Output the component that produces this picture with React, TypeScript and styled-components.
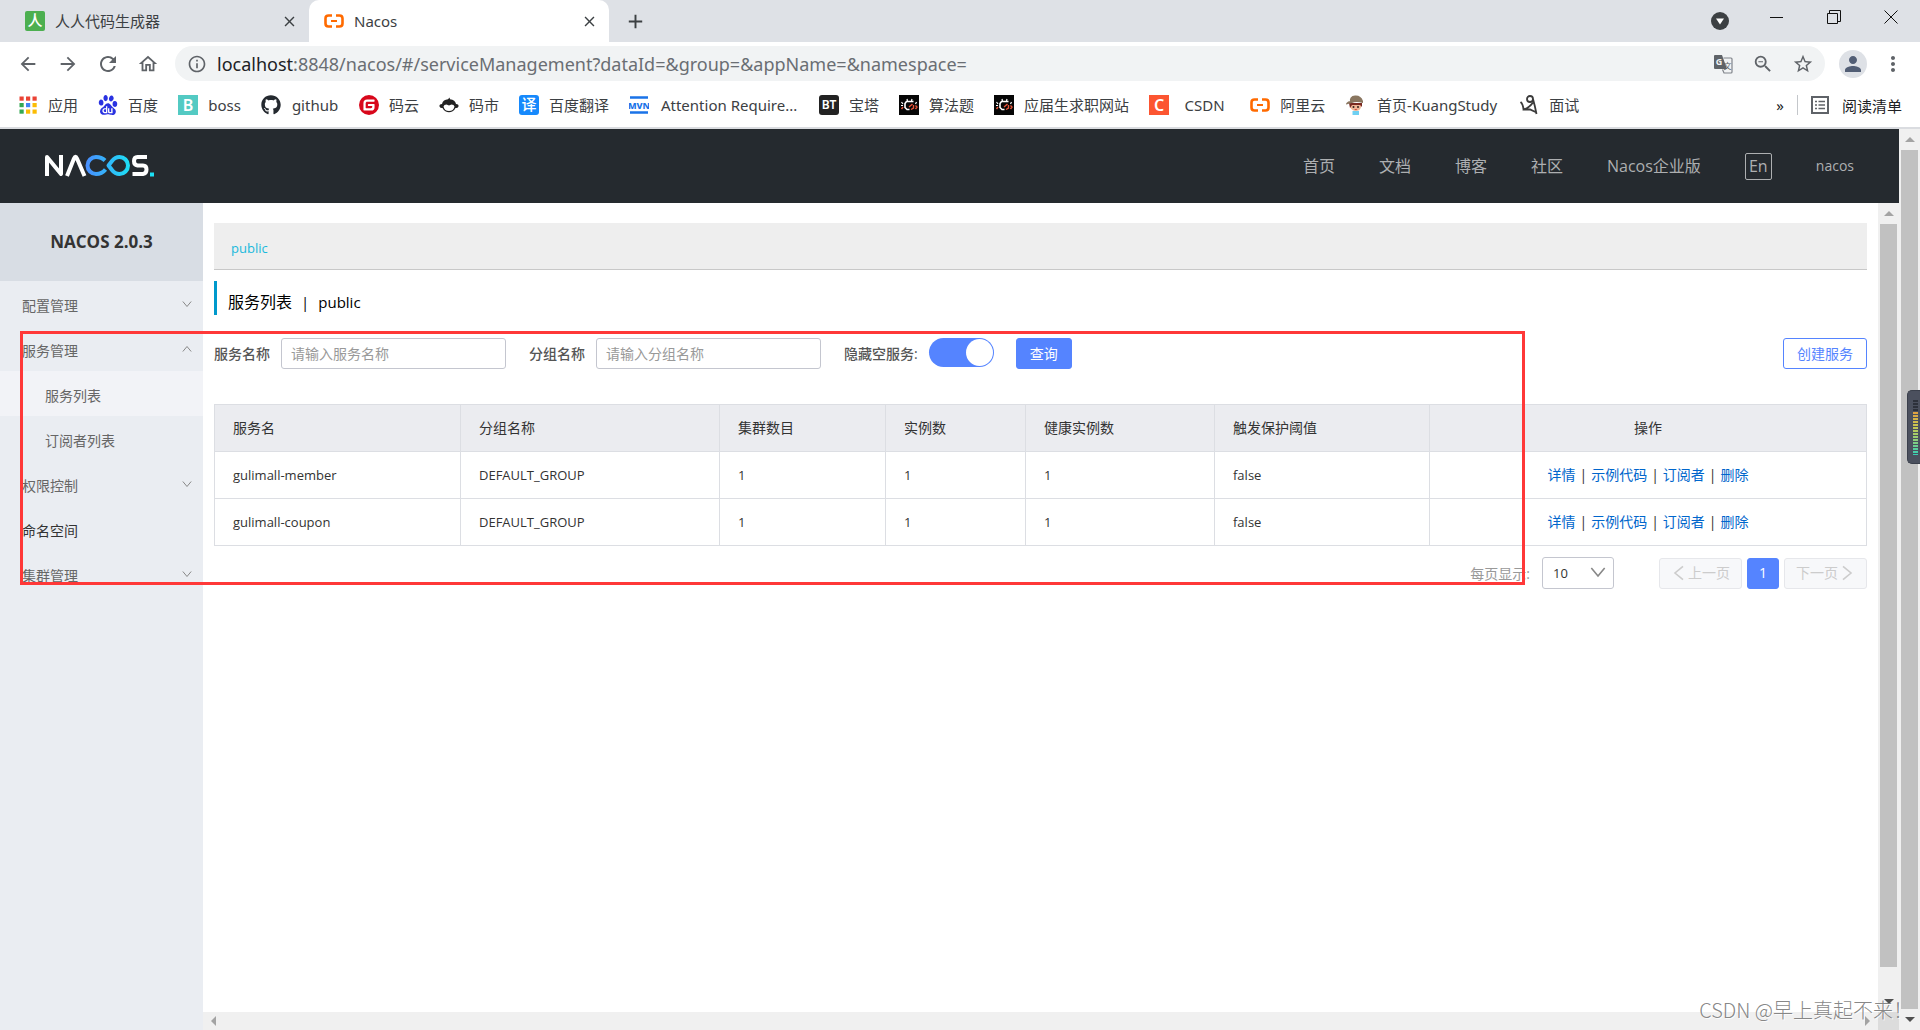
import React from "react";
import styled, { createGlobalStyle, css } from "styled-components";
import {
  MdAdd,
  MdArrowBack,
  MdArrowForward,
  MdClose,
  MdInfoOutline,
  MdMoreVert,
  MdOutlineHome,
  MdPerson,
  MdRefresh,
  MdStarBorder,
  MdZoomOut,
} from "react-icons/md";
import { FaGithub } from "react-icons/fa";
import { SiBaidu, SiGitee } from "react-icons/si";

const sans = `"Open Sans", "Noto Sans CJK SC", sans-serif`;
const chromeSans = `"Noto Sans", "Noto Sans CJK SC", sans-serif`;

const GlobalStyle = createGlobalStyle`
  * { box-sizing: border-box; }
  body { margin: 0; font-family: ${sans}; font-size: 14px; color: #333; background: #fff; overflow: hidden; }
  button, input, select { font-family: inherit; }
  a { text-decoration: none; }
`;

const Window = styled.div`
  position: relative;
  display: flex;
  flex-direction: column;
  height: 100vh;
  overflow: hidden;
`;

/* ---------- browser chrome ---------- */

const IconButton = styled.button<{ $size?: number; $color?: string }>`
  display: flex;
  align-items: center;
  justify-content: center;
  flex: none;
  width: ${(p) => p.$size ?? 40}px;
  height: ${(p) => p.$size ?? 40}px;
  padding: 0;
  border: 0;
  background: none;
  color: ${(p) => p.$color ?? "#5f6368"};
`;

const TabStrip = styled.div`
  display: flex;
  align-items: center;
  height: 42px;
  flex: none;
  font-family: ${chromeSans};
  background: #dee1e6;
`;

const Tab = styled.div<{ $active?: boolean }>`
  display: flex;
  align-items: center;
  gap: 10px;
  width: ${(p) => (p.$active ? 300 : 309)}px;
  height: 42px;
  padding: 0 11px 0 ${(p) => (p.$active ? 15 : 25)}px;
  border-radius: 10px 10px 0 0;
  font-size: 15px;
  color: #3c4043;
  background: ${(p) => (p.$active ? "#fff" : "transparent")};
`;

const TabTitle = styled.span`
  flex: 1;
  line-height: 20px;
`;

const WindowControls = styled.div`
  display: flex;
  align-items: center;
  margin-left: auto;
  height: 42px;
  padding-right: 9px;
`;

const WindowButton = styled(IconButton)`
  width: 40px;
  height: 34px;
  margin-left: 17px;
  align-self: flex-start;
  color: #111;
`;

const Toolbar = styled.div`
  display: flex;
  align-items: center;
  flex: none;
  height: 43px;
  padding: 0 7px 0 8px;
  font-family: ${chromeSans};
`;

const Omnibox = styled.div`
  display: flex;
  align-items: center;
  flex: 1;
  height: 35px;
  margin: 0 8px 0 7px;
  padding: 0 2px 0 12px;
  gap: 10px;
  border-radius: 18px;
  background: #f1f3f4;
  color: #5f6368;
`;

const Url = styled.span`
  flex: 1;
  font-size: 18px;
  line-height: 24px;
  color: #6a6e73;
  b { font-weight: 400; color: #202124; }
`;

const OmniActions = styled.div`
  display: flex;
`;

const Avatar = styled.span`
  display: flex;
  align-items: center;
  justify-content: center;
  width: 28px;
  height: 28px;
  border-radius: 50%;
  background: #dee1e6;
  color: #525e75;
`;

const Bookmarks = styled.nav`
  display: flex;
  align-items: center;
  flex: none;
  height: 44px;
  padding: 0 18px 2px;
  gap: 20px;
  border-bottom: 2px solid #dadce0;
  font-family: ${chromeSans};
`;

const Bookmark = styled.a`
  display: flex;
  align-items: center;
  gap: 10px;
  flex: none;
  font-size: 15px;
  line-height: 20px;
  color: #3c4043;
  white-space: nowrap;
  svg { flex: none; }
`;

const BookmarkLabel = styled.span<{ $width?: number }>`
  min-width: ${(p) => p.$width ?? 30}px;
  text-align: center;
`;

const ReadingList = styled.div`
  display: flex;
  align-items: center;
  gap: 13px;
  margin-left: auto;
  font-size: 15px;
  color: #202124;
`;

const Divider = styled.span`
  width: 1px;
  height: 20px;
  background: #c4c7cb;
`;

/* ---------- page ---------- */

const Viewport = styled.div`
  display: flex;
  flex: 1;
  min-height: 0;
`;

const Page = styled.div`
  display: flex;
  flex-direction: column;
  flex: 1;
  min-width: 0;
`;

const Header = styled.header`
  display: flex;
  align-items: center;
  justify-content: space-between;
  flex: none;
  height: 74px;
  padding: 0 45px 0 45px;
  background: #252a2f;
`;

const HeaderNav = styled.nav`
  display: flex;
  align-items: center;
  gap: 44px;
`;

const HeaderLink = styled.a<{ $small?: boolean }>`
  font-size: ${(p) => (p.$small ? 14 : 16)}px;
  line-height: 24px;
  color: #adafb1;
`;

const LangButton = styled.button`
  width: 27px;
  height: 27px;
  padding: 0;
  border: 1px solid #adafb1;
  border-radius: 2px;
  background: none;
  color: #adafb1;
  font-size: 16px;
  line-height: 22px;
`;

const Body = styled.div`
  display: flex;
  flex: 1;
  min-height: 0;
`;

const Sidebar = styled.aside`
  flex: none;
  width: 203px;
  background: #eaedf2;
`;

const SideTitle = styled.h1`
  margin: 0;
  height: 78px;
  font-size: 17px;
  line-height: 78px;
  font-weight: 700;
  text-align: center;
  color: #333;
  background: #d8dde4;
`;

const MenuItem = styled.button<{ $level?: number; $active?: boolean; $dark?: boolean }>`
  display: flex;
  align-items: center;
  justify-content: space-between;
  width: 100%;
  height: 45px;
  padding: 0 11px 0 ${(p) => (p.$level === 2 ? 45 : 22)}px;
  border: 0;
  font-size: 14px;
  text-align: left;
  color: ${(p) => (p.$dark ? "#333" : "#666")};
  background: ${(p) => (p.$active ? "#f2f3f7" : "transparent")};
  span { padding-top: 3px; }
`;

const Column = styled.div`
  display: flex;
  flex-direction: column;
  flex: 1;
  min-width: 0;
`;

const Content = styled.main`
  flex: 1;
  min-height: 0;
  padding: 20px 11px 0;
`;

const NamespaceBar = styled.div`
  display: flex;
  align-items: center;
  height: 47px;
  padding: 4px 17px 0;
  border-bottom: 1px solid #c8c8c8;
  background: #eee;
  a { font-size: 13px; color: #1ab9dc; }
`;

const PageTitle = styled.h2`
  display: flex;
  gap: 9px;
  height: 34px;
  margin: 11px 0 23px;
  padding: 6px 0 0 11px;
  border-left: 3px solid #09c;
  font-size: 16px;
  line-height: 30px;
  font-weight: 400;
  color: #000;
  span { font-size: 15px; }
`;

const Form = styled.form`
  display: flex;
  align-items: center;
  height: 31px;
`;

const Label = styled.label`
  flex: none;
  margin-right: 11px;
  font-size: 14px;
  line-height: 20px;
  font-weight: 500;
  color: #555;
`;

const TextInput = styled.input`
  width: 225px;
  height: 31px;
  margin-right: 23px;
  padding: 0 9px;
  border: 1px solid #c4c6cf;
  border-radius: 3px;
  font-size: 14px;
  color: #333;
  &::placeholder { color: #999; opacity: 1; }
`;

const Switch = styled.input`
  appearance: none;
  display: flex;
  justify-content: flex-end;
  width: 65px;
  height: 29px;
  margin: 0 22px 2px 0;
  padding: 1px;
  border-radius: 15px;
  background: #5584ff;
  &::after {
    content: "";
    width: 27px;
    height: 27px;
    border-radius: 50%;
    background: #fff;
  }
`;

const Button = styled.button<{ $kind?: "primary" | "outline" | "disabled"; $tight?: boolean }>`
  display: flex;
  align-items: center;
  justify-content: center;
  gap: 1px;
  height: 31px;
  padding: 0 ${(p) => (p.$tight ? 11 : 13)}px;
  border: 1px solid #5584ff;
  border-radius: 3px;
  font-size: 14px;
  line-height: 20px;
  white-space: nowrap;
  ${(p) =>
    p.$kind === "outline"
      ? css`background: #fff; color: #5584ff;`
      : p.$kind === "disabled"
      ? css`background: #f7f8fa; color: #ccc; border-color: #e6e7eb;`
      : css`background: #5584ff; color: #fff;`}
`;

const Spacer = styled.span`
  flex: 1;
`;

const Table = styled.table`
  width: 100%;
  margin-top: 35px;
  border-collapse: collapse;
  table-layout: fixed;
  color: #333;
`;

const cell = css<{ $center?: boolean }>`
  height: 47px;
  padding: 0 18px;
  border: 1px solid #dcdee3;
  font-size: 14px;
  line-height: 20px;
  font-weight: 400;
  text-align: ${(p) => (p.$center ? "center" : "left")};
`;
const Th = styled.th`
  ${cell}
  background: #ebecf0;
`;
const Td = styled.td`
  ${cell}
`;
const Latin = styled.span`
  font-size: 13px;
`;

const Action = styled.a`
  color: #06c;
`;
const Bar = styled.span`
  margin: 0 4px;
`;

const Pager = styled.div`
  display: flex;
  align-items: center;
  justify-content: flex-end;
  margin-top: 11px;
  gap: 5px;
`;

const PageSizeLabel = styled.label`
  margin-right: 7px;
  color: #999;
`;

const SelectBox = styled.div`
  position: relative;
  margin-right: 40px;
  svg { position: absolute; right: 8px; top: 7px; pointer-events: none; }
`;

const Select = styled.select`
  appearance: none;
  display: block;
  width: 72px;
  height: 32px;
  padding: 0 10px;
  border: 1px solid #c4c6cf;
  border-radius: 3px;
  background: #fff;
  font-size: 13px;
  color: #333;
`;

const ScrollTrack = styled.div`
  display: flex;
  flex-direction: column;
  align-items: center;
  flex: none;
  width: 21px;
  background: #f0f0f0;
`;

const ScrollThumb = styled.div`
  flex: 1;
  width: 17px;
  background: #c1c1c1;
`;

const ScrollArrow = styled.span<{ $dir: "up" | "down" | "left" | "right"; $dark?: boolean }>`
  display: flex;
  align-items: center;
  justify-content: center;
  flex: none;
  width: 21px;
  height: 21px;
  &::after {
    content: "";
    border: 5px solid transparent;
    ${(p) => {
      const c = p.$dark ? "#505050" : "#a3a3a3";
      if (p.$dir === "up") return `border-bottom-color: ${c}; border-top: 0;`;
      if (p.$dir === "down") return `border-top-color: ${c}; border-bottom: 0;`;
      if (p.$dir === "left") return `border-right-color: ${c}; border-left: 0;`;
      return `border-left-color: ${c}; border-right: 0;`;
    }}
  }
`;

const InnerTrack = styled(ScrollTrack)`
  & > :nth-child(2) { margin-bottom: 24px; }
`;

const Corner = styled.span`
  width: 21px;
  height: 18px;
  background: #dcdcdc;
`;

const HScroll = styled.div`
  display: flex;
  align-items: center;
  justify-content: space-between;
  flex: none;
  height: 18px;
  background: #f0f0f0;
`;

const Selection = styled.div`
  position: absolute;
  left: 20px;
  right: 395px;
  top: 331px;
  height: 254px;
  border: 3px solid #ff3838;
  pointer-events: none;
`;

const Meter = styled.div`
  position: absolute;
  right: 0;
  top: 390px;
  width: 13px;
  height: 74px;
  padding: 9px 2px 9px 5px;
  border: 1px solid #3a3f4b;
  border-right: 0;
  border-radius: 5px 0 0 5px;
  background: #4b505e;
  &::after {
    content: "";
    display: block;
    height: 55px;
    background:
      repeating-linear-gradient(transparent 0 2px, #4b505e 2px 3px),
      linear-gradient(#2d313b 0 12px, #e0a040 12px, #c9c850 26px, #8fcf7a 40px, #35d0b4);
  }
`;

const Watermark = styled.div`
  position: absolute;
  right: 7px;
  bottom: 4px;
  font-family: "Noto Sans CJK SC", sans-serif;
  font-size: 20px;
  line-height: 32px;
  font-weight: 300;
  color: rgba(120, 120, 120, 0.9);
  text-shadow: 1px 1px 0 rgba(255, 255, 255, 0.8);
  pointer-events: none;
`;

/* ---------- drawings ---------- */

const CloudIcon = () => (
  <svg width="20" height="20" viewBox="0 0 20 20" fill="none" stroke="#ff6a00" strokeWidth="2.600">
    <path d="M8 4.500H4.500Q1.500 4.500 1.500 7.500V12.500Q1.500 15.500 4.500 15.500H8M12 4.500H15.500Q18.500 4.500 18.500 7.500V12.500Q18.500 15.500 15.500 15.500H12" />
    <path d="M7 10H13" strokeWidth="2" />
  </svg>
);

interface BadgeProps {
  bg: string;
  text: string;
  size: number;
  radius?: number;
  bold?: boolean;
}
const Badge = ({ bg, text, size, radius = 0, bold }: BadgeProps) => (
  <svg width="20" height="20" viewBox="0 0 20 20">
    <rect width="20" height="20" rx={radius} fill={bg} />
    <text x="10" y={10 + size * 0.36} fontSize={size} fontWeight={bold ? 600 : 500} fill="#fff" textAnchor="middle">
      {text}
    </text>
  </svg>
);

const appColors = ["#ea4335", "#ea4335", "#ea4335", "#34a853", "#4285f4", "#fbbc04", "#34a853", "#fbbc04", "#fbbc04"];
const AppsIcon = () => (
  <svg width="20" height="20" viewBox="0 0 20 20">
    {appColors.map((c, i) => (
      <rect key={i} x={1.5 + (i % 3) * 6.5} y={1.5 + Math.floor(i / 3) * 6.5} width="4.200" height="4.200" fill={c} />
    ))}
  </svg>
);

const MonkeyIcon = () => (
  <svg width="20" height="20" viewBox="0 0 20 20">
    <path d="M3 9C3.500 6 6 4.500 9 4.300L10.500 2.500L11 4.300C14.500 4.500 16.500 6.500 17 9Q20 9 19.500 11.500Q18.500 13.500 16.500 13C15 16 12.500 17.300 10 17.300S5 16 3.500 13Q1.500 13.500 .5 11.500Q0 9 3 9Z" fill="#222" />
    <path d="M4.500 11.500Q5 9.500 7.500 9.500L10 10.500L12.500 9.500Q15 9.500 15.500 11.500Q14.500 16 10 16T4.500 11.500Z" fill="#fff" />
  </svg>
);

const MvnIcon = () => (
  <svg width="20" height="20" viewBox="0 0 20 20">
    <path d="M1 2.500H19M1 17.500H19" stroke="#1a73e8" strokeWidth="2.500" />
    <text x="10" y="13.500" fontSize="9" fontWeight="800" fill="#1a73e8" textAnchor="middle">MVN</text>
  </svg>
);

const BugIcon = () => (
  <svg width="20" height="20" viewBox="0 0 20 20" fill="none">
    <rect width="20" height="20" fill="#060606" />
    <path d="M14.500 6.500H7.500L6 8.500V12.500L8 14.500H10.500" stroke="#fff" strokeWidth="1.600" />
    <path d="M8.500 6L8 4M12.500 6L13 4M4 9L2.500 7M4 10.500H2M16.500 9L17.500 7" stroke="#fff" strokeWidth="1.200" />
    <path d="M13.500 9L10 12M12 14.500L14.500 13V10M4 12L2.500 14M16.500 10.500L18 12L16.500 14" stroke="#e8553a" strokeWidth="1.400" />
  </svg>
);

const BoyIcon = () => (
  <svg width="20" height="20" viewBox="0 0 20 20">
    <path d="M5 9H16V12Q15 16 11 16T5 12Z" fill="#f0b595" />
    <path d="M4 8H17V12L15 10H7L5 13Z" fill="#7a2a22" />
    <path d="M5 7Q4 1 10 .5T18 6V8Q11 6 7 8L1 9.500Q1 7 5 6Z" fill="#8a7660" />
    <circle cx="8.500" cy="12" r="1" fill="#35221e" />
    <circle cx="13" cy="12" r="1" fill="#35221e" />
    <path d="M9 14H12.500L11 15Z" fill="#c4302b" />
    <path d="M7.500 16H14V20H7.500Z" fill="#6fd0f2" />
  </svg>
);

const InterviewIcon = () => (
  <svg width="20" height="20" viewBox="0 0 20 20" fill="none" stroke="#3b3b3b" strokeWidth="1.800">
    <circle cx="11" cy="4" r="3" />
    <path d="M1.500 7Q4 9 4.500 14.500Q10 13 14 7.500M14 4Q16 11 17.500 19M4.500 14.500H11L16.500 17" />
  </svg>
);

const TranslateIcon = () => (
  <svg width="20" height="20" viewBox="0 0 20 20">
    <path d="M2 1H9L14 15H2Q1 15 1 14V2Q1 1 2 1Z" fill="#5f6368" />
    <path d="M10.500 4H18Q19 4 19 5V18Q19 19 18 19H11L9.500 15.500" fill="none" stroke="#80848a" strokeWidth="1.200" />
    <text x="6" y="11" fontSize="9" fontWeight="700" fill="#f1f3f4" textAnchor="middle">G</text>
    <text x="14.500" y="15" fontSize="8" fill="#5f6368" textAnchor="middle">文</text>
  </svg>
);

const ReadingIcon = () => (
  <svg width="18" height="18" viewBox="0 0 18 18" fill="none" stroke="#5f6368" strokeWidth="2">
    <rect x="1" y="1" width="16" height="16" />
    <path d="M4 5.500H6M4 9H6M4 12.500H6M7.500 5.500H14M7.500 9H14M7.500 12.500H14" strokeWidth="1.600" />
  </svg>
);

const DropCircle = () => (
  <svg width="18" height="18" viewBox="0 0 18 18">
    <circle cx="9" cy="9" r="9" fill="#3c4043" />
    <path d="M5 6.500H13L9 12.500Z" fill="#fff" />
  </svg>
);

const Chevron = ({ dir, size = 10 }: { dir: "up" | "down" | "left" | "right"; size?: number }) => {
  const d = {
    down: "M1 3L6 9L11 3",
    up: "M1 9L6 3L11 9",
    left: "M9 1L3 6L9 11",
    right: "M3 1L9 6L3 11",
  }[dir];
  return (
    <svg width={size} height={size} viewBox="0 0 12 12" fill="none" stroke={dir === "left" || dir === "right" ? "#ccc" : "#888"} strokeWidth="1.200">
      <path d={d} />
    </svg>
  );
};

const NacosLogo = () => (
  <svg width="110" height="24" viewBox="0 0 110 24" role="img" aria-label="Nacos">
    <defs>
      <linearGradient id="loop" gradientUnits="userSpaceOnUse" x1="40" x2="85" y1="0" y2="0">
        <stop offset="0" stopColor="#4a8cff" />
        <stop offset="1" stopColor="#1ce0f5" />
      </linearGradient>
    </defs>
    <path d="M2 22V3L16 20V1M22 22L29 4.500Q30.500 1 32 4.500L39.500 22" fill="none" stroke="#fff" strokeWidth="4" strokeLinejoin="round" />
    <path d="M60 6.500C57.500 4 55.500 3 51 3A8.500 8.500 0 0 0 51 20C55.500 20 58.500 18 60.500 15.500" fill="none" stroke="url(#loop)" strokeWidth="4" />
    <path d="M63.500 11.500L67 7Q70 3 74.500 3A8.500 8.500 0 0 1 74.500 20Q70 20 67 16L63.500 11.500Z" fill="none" stroke="url(#loop)" strokeWidth="4" strokeLinejoin="round" />
    <path d="M102 3H92.500Q89 3 89 7T92.500 11.500H98Q101.500 11.500 101.500 15.500T98 20H87.500" fill="none" stroke="#fff" strokeWidth="4" />
    <rect x="105" y="18.500" width="4" height="4" fill="#1ce0f5" />
  </svg>
);

/* ---------- data ---------- */

const bookmarks: { label: string; icon: React.ReactNode; width?: number }[] = [
  { label: "应用", icon: <AppsIcon /> },
  { label: "百度", icon: <SiBaidu size={20} color="#2932e1" /> },
  { label: "boss", icon: <Badge bg="#53cac3" text="B" size={16} bold />, width: 33 },
  { label: "github", icon: <FaGithub size={20} color="#24292f" />, width: 48 },
  { label: "码云", icon: <SiGitee size={20} color="#d8071b" /> },
  { label: "码市", icon: <MonkeyIcon /> },
  { label: "百度翻译", icon: <Badge bg="#1689fc" text="译" size={15} radius={3} /> },
  { label: "Attention Require...", icon: <MvnIcon />, width: 140 },
  { label: "宝塔", icon: <Badge bg="#222" text="BT" size={12} radius={3} bold /> },
  { label: "算法题", icon: <BugIcon /> },
  { label: "应届生求职网站", icon: <BugIcon /> },
  { label: "CSDN", icon: <Badge bg="#fc5531" text="C" size={16} bold />, width: 51 },
  { label: "阿里云", icon: <CloudIcon /> },
  { label: "首页-KuangStudy", icon: <BoyIcon />, width: 124 },
  { label: "面试", icon: <InterviewIcon /> },
];

const columns = [
  { title: "服务名", width: 246 },
  { title: "分组名称", width: 259 },
  { title: "集群数目", width: 166 },
  { title: "实例数", width: 140 },
  { title: "健康实例数", width: 189 },
  { title: "触发保护阈值", width: 215 },
  { title: "操作", width: 437 },
];

const services = [
  ["gulimall-member", "DEFAULT_GROUP", "1", "1", "1", "false"],
  ["gulimall-coupon", "DEFAULT_GROUP", "1", "1", "1", "false"],
];

const actions = ["详情", "示例代码", "订阅者", "删除"];

const menu: { label: string; arrow?: "up" | "down"; level?: number; active?: boolean; dark?: boolean }[] = [
  { label: "配置管理", arrow: "down" },
  { label: "服务管理", arrow: "up" },
  { label: "服务列表", level: 2, active: true },
  { label: "订阅者列表", level: 2 },
  { label: "权限控制", arrow: "down" },
  { label: "命名空间", dark: true },
  { label: "集群管理", arrow: "down" },
];

export default function App() {
  return (
    <Window>
      <GlobalStyle />
      <TabStrip>
        <Tab>
          <Badge bg="#4caf50" text="人" size={15} radius={2} />
          <TabTitle>人人代码生成器</TabTitle>
          <IconButton $size={18} $color="#3c4043" aria-label="关闭"><MdClose size={17} /></IconButton>
        </Tab>
        <Tab $active>
          <CloudIcon />
          <TabTitle>Nacos</TabTitle>
          <IconButton $size={18} $color="#3c4043" aria-label="关闭"><MdClose size={17} /></IconButton>
        </Tab>
        <IconButton $size={52} $color="#3c4043" aria-label="新标签页"><MdAdd size={23} /></IconButton>
        <WindowControls>
          <IconButton aria-label="搜索标签页"><DropCircle /></IconButton>
          <WindowButton aria-label="最小化">
            <svg width="14" height="14" stroke="currentColor"><path d="M0 7.500H13" /></svg>
          </WindowButton>
          <WindowButton aria-label="还原">
            <svg width="14" height="14" fill="none" stroke="currentColor"><path d="M.5 3.500H10.500V13.500H.5ZM2.500 3V.5H13.500V11.500H11" /></svg>
          </WindowButton>
          <WindowButton aria-label="关闭窗口">
            <svg width="14" height="14" stroke="currentColor"><path d="M.5 .5L13.500 13.500M13.500 .5L.5 13.500" /></svg>
          </WindowButton>
        </WindowControls>
      </TabStrip>

      <Toolbar>
        <IconButton aria-label="后退"><MdArrowBack size={22} /></IconButton>
        <IconButton aria-label="前进"><MdArrowForward size={22} /></IconButton>
        <IconButton aria-label="刷新"><MdRefresh size={24} /></IconButton>
        <IconButton aria-label="主页"><MdOutlineHome size={22} /></IconButton>
        <Omnibox>
          <MdInfoOutline size={20} />
          <Url><b>localhost</b>:8848/nacos/#/serviceManagement?dataId=&amp;group=&amp;appName=&amp;namespace=</Url>
          <OmniActions>
            <IconButton aria-label="翻译"><TranslateIcon /></IconButton>
            <IconButton aria-label="缩放"><MdZoomOut size={22} /></IconButton>
            <IconButton aria-label="收藏"><MdStarBorder size={22} /></IconButton>
          </OmniActions>
        </Omnibox>
        <IconButton aria-label="用户"><Avatar><MdPerson size={24} /></Avatar></IconButton>
        <IconButton aria-label="菜单"><MdMoreVert size={24} /></IconButton>
      </Toolbar>

      <Bookmarks>
        {bookmarks.map((b) => (
          <Bookmark href="#" key={b.label}>
            {b.icon}
            <BookmarkLabel $width={b.width}>{b.label}</BookmarkLabel>
          </Bookmark>
        ))}
        <ReadingList>
          <span>»</span>
          <Divider />
          <ReadingIcon />
          <span>阅读清单</span>
        </ReadingList>
      </Bookmarks>

      <Viewport>
        <Page>
          <Header>
            <NacosLogo />
            <HeaderNav>
              {["首页", "文档", "博客", "社区", "Nacos企业版"].map((t) => (
                <HeaderLink href="#" key={t}>{t}</HeaderLink>
              ))}
              <LangButton>En</LangButton>
              <HeaderLink href="#" $small>nacos</HeaderLink>
            </HeaderNav>
          </Header>
          <Body>
            <Sidebar>
              <SideTitle>NACOS 2.0.3</SideTitle>
              {menu.map((m) => (
                <MenuItem key={m.label} $level={m.level} $active={m.active} $dark={m.dark}>
                  <span>{m.label}</span>
                  {m.arrow && <Chevron dir={m.arrow} />}
                </MenuItem>
              ))}
            </Sidebar>
            <Column>
              <Content>
                <NamespaceBar><a href="#">public</a></NamespaceBar>
                <PageTitle>服务列表<span>|</span><span>public</span></PageTitle>
                <Form onSubmit={(e) => e.preventDefault()}>
                  <Label htmlFor="service">服务名称</Label>
                  <TextInput id="service" placeholder="请输入服务名称" />
                  <Label htmlFor="group">分组名称</Label>
                  <TextInput id="group" placeholder="请输入分组名称" />
                  <Label htmlFor="hide">隐藏空服务:</Label>
                  <Switch id="hide" type="checkbox" defaultChecked />
                  <Button>查询</Button>
                  <Spacer />
                  <Button type="button" $kind="outline">创建服务</Button>
                </Form>
                <Table>
                  <colgroup>
                    {columns.map((c) => <col key={c.title} width={c.width} />)}
                  </colgroup>
                  <thead>
                    <tr>
                      {columns.map((c) => <Th key={c.title} $center={c.title === "操作"}>{c.title}</Th>)}
                    </tr>
                  </thead>
                  <tbody>
                    {services.map((row) => (
                      <tr key={row[0]}>
                        {row.map((v, i) => <Td key={i}><Latin>{v}</Latin></Td>)}
                        <Td $center>
                          {actions.map((a, i) => (
                            <React.Fragment key={a}>
                              {i > 0 && <Bar>|</Bar>}
                              <Action href="#">{a}</Action>
                            </React.Fragment>
                          ))}
                        </Td>
                      </tr>
                    ))}
                  </tbody>
                </Table>
                <Pager>
                  <PageSizeLabel htmlFor="size">每页显示:</PageSizeLabel>
                  <SelectBox>
                    <Select id="size" defaultValue="10"><option>10</option></Select>
                    <Chevron dir="down" size={16} />
                  </SelectBox>
                  <Button $kind="disabled" $tight disabled><Chevron dir="left" size={16} />上一页</Button>
                  <Button $tight>1</Button>
                  <Button $kind="disabled" $tight disabled>下一页<Chevron dir="right" size={16} /></Button>
                </Pager>
              </Content>
              <HScroll>
                <ScrollArrow $dir="left" />
                <ScrollArrow $dir="right" />
              </HScroll>
            </Column>
            <InnerTrack>
              <ScrollArrow $dir="up" />
              <ScrollThumb />
              <ScrollArrow $dir="down" $dark />
              <Corner />
            </InnerTrack>
          </Body>
        </Page>
        <ScrollTrack>
          <ScrollArrow $dir="up" />
          <ScrollThumb />
          <ScrollArrow $dir="down" $dark />
        </ScrollTrack>
      </Viewport>

      <Selection />
      <Meter />
      <Watermark>CSDN @早上真起不来！</Watermark>
    </Window>
  );
}
